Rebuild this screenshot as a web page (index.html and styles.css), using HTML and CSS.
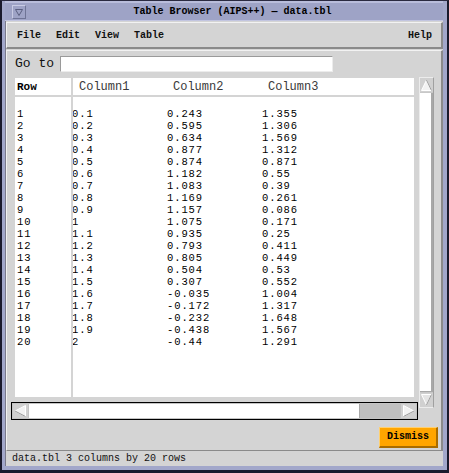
FILE: index.html
```html
<!DOCTYPE html>
<html>
<head>
<meta charset="utf-8">
<link rel="stylesheet" href="styles.css">
</head>
<body>
<div class="window">
  <div class="titlebar">
    <div class="winbtn">
      <svg width="12" height="12" viewBox="0 0 12 12"><polygon points="2.5,3.5 9.5,3.5 6,9.5" fill="none" stroke="#5a5f80" stroke-width="1"/></svg>
    </div>
    <div class="title">Table Browser (AIPS++) — data.tbl</div>
  </div>
  <div class="client">
    <div class="menubar">
      <span class="mi">File</span>
      <span class="mi">Edit</span>
      <span class="mi">View</span>
      <span class="mi">Table</span>
      <span class="mi help">Help</span>
    </div>
    <div class="panel">
      <div class="goto">
        <span class="gotolabel">Go to</span>
        <div class="input"></div>
      </div>
      <div class="tablewrap">
        <div class="tableleft">
          <div class="grid">
            <div class="rowcol">
              <div class="hdr"><span class="rowhdr">Row</span></div>
              <div class="body">
                <div>1</div><div>2</div><div>3</div><div>4</div><div>5</div>
                <div>6</div><div>7</div><div>8</div><div>9</div><div>10</div>
                <div>11</div><div>12</div><div>13</div><div>14</div><div>15</div>
                <div>16</div><div>17</div><div>18</div><div>19</div><div>20</div>
              </div>
            </div>
            <div class="datacol">
              <div class="hdr cols"><span>Column1</span><span>Column2</span><span>Column3</span></div>
              <div class="body cols">
                <span>0.1</span><span>0.243</span><span>1.355</span>
                <span>0.2</span><span>0.595</span><span>1.306</span>
                <span>0.3</span><span>0.634</span><span>1.569</span>
                <span>0.4</span><span>0.877</span><span>1.312</span>
                <span>0.5</span><span>0.874</span><span>0.871</span>
                <span>0.6</span><span>1.182</span><span>0.55</span>
                <span>0.7</span><span>1.083</span><span>0.39</span>
                <span>0.8</span><span>1.169</span><span>0.261</span>
                <span>0.9</span><span>1.157</span><span>0.086</span>
                <span>1</span><span>1.075</span><span>0.171</span>
                <span>1.1</span><span>0.935</span><span>0.25</span>
                <span>1.2</span><span>0.793</span><span>0.411</span>
                <span>1.3</span><span>0.805</span><span>0.449</span>
                <span>1.4</span><span>0.504</span><span>0.53</span>
                <span>1.5</span><span>0.307</span><span>0.552</span>
                <span>1.6</span><span>-0.035</span><span>1.004</span>
                <span>1.7</span><span>-0.172</span><span>1.317</span>
                <span>1.8</span><span>-0.232</span><span>1.648</span>
                <span>1.9</span><span>-0.438</span><span>1.567</span>
                <span>2</span><span>-0.44</span><span>1.291</span>
              </div>
            </div>
          </div>
          <div class="hscroll">
            <div class="arrow">
              <svg width="15" height="14" viewBox="0 0 15 14"><polygon points="12.5,1.5 12.5,12.5 2,7" fill="#f2f2f2" stroke="#ffffff" stroke-width="1"/><line x1="12.5" y1="12.5" x2="2" y2="7" stroke="#9a9a9a"/></svg>
            </div>
            <div class="hthumb"></div>
            <div class="trough"></div>
            <div class="arrow">
              <svg width="15" height="14" viewBox="0 0 15 14"><polygon points="2.5,1.5 2.5,12.5 13,7" fill="#f2f2f2" stroke="#ffffff" stroke-width="1"/><line x1="2.5" y1="12.5" x2="13" y2="7" stroke="#9a9a9a"/></svg>
            </div>
          </div>
        </div>
        <div class="vscroll">
          <div class="varrow">
            <svg width="13" height="14" viewBox="0 0 13 14"><polygon points="1.5,12.5 11.5,12.5 6.5,2" fill="#f2f2f2" stroke="#ffffff" stroke-width="1"/><line x1="11.5" y1="12.5" x2="6.5" y2="2" stroke="#9a9a9a"/></svg>
          </div>
          <div class="vthumb"></div>
          <div class="varrow">
            <svg width="13" height="14" viewBox="0 0 13 14"><polygon points="1.5,1.5 11.5,1.5 6.5,12" fill="#e4e4e4" stroke="#ffffff" stroke-width="1"/><line x1="11.5" y1="1.5" x2="6.5" y2="12" stroke="#9a9a9a"/></svg>
          </div>
        </div>
      </div>
      <div class="actions">
        <div class="dismiss">Dismiss</div>
      </div>
    </div>
    <div class="status">data.tbl 3 columns by 20 rows</div>
  </div>
</div>
</body>
</html>
```

FILE: styles.css
```css
html, body {
  margin: 0;
  padding: 0;
  background: #1a1a2c;
}

.window {
  width: 449px;
  height: 473px;
  box-sizing: border-box;
  background: #a2a7ca;
  border-top: 1px solid #2a2a40;
  border-left: 2px solid #1a1a2c;
  border-right: 2px solid #1a1a2c;
  border-bottom: 3px solid #1a1a2c;
  padding: 0 4px 4px 3px;
  display: flex;
  flex-direction: column;
  font-family: "Liberation Mono", "DejaVu Sans Mono", monospace;
}

.titlebar {
  height: 20px;
  box-sizing: border-box;
  border-top: 2px solid #b9bddb;
  border-bottom: 1px solid #c2c5e0;
  background: #9ea3c6;
  display: flex;
  align-items: center;
}

.winbtn {
  width: 14px;
  height: 14px;
  box-sizing: border-box;
  margin-left: 7px;
  border-top: 1px solid #c8cbe4;
  border-left: 1px solid #c8cbe4;
  border-right: 1px solid #6f7496;
  border-bottom: 1px solid #6f7496;
  display: flex;
  align-items: center;
  justify-content: center;
}

.title {
  flex: 1;
  text-align: center;
  font-size: 10px;
  font-weight: bold;
  color: #000;
  padding-right: 4px;
}

.client {
  flex: 1;
  display: flex;
  flex-direction: column;
  background: #d4d4d4;
  border-left: 1px solid #7a7a8a;
}

.menubar {
  margin-top: 1px;
  height: 27px;
  box-sizing: border-box;
  border-top: 1px solid #f2f2f2;
  border-left: 1px solid #f2f2f2;
  border-right: 2px solid #8a8a8a;
  border-bottom: 2px solid #8a8a8a;
  display: flex;
  align-items: center;
  gap: 15px;
  padding-left: 10px;
  padding-right: 9px;
  font-size: 10px;
  font-weight: bold;
  color: #111;
}

.menubar .help {
  margin-left: auto;
}

.panel {
  flex: 1;
  margin-top: 1px;
  box-sizing: border-box;
  border-top: 1px solid #f2f2f2;
  border-left: 1px solid #f2f2f2;
  border-right: 2px solid #8a8a8a;
  border-bottom: 1px solid #8a8a8a;
  padding-left: 4px;
  display: flex;
  flex-direction: column;
}

.goto {
  margin-top: 5px;
  height: 16px;
  display: flex;
  align-items: center;
  padding-left: 4px;
}

.gotolabel {
  font-size: 13px;
  color: #111;
  width: 45px;
  line-height: 16px;
}

.input {
  width: 273px;
  height: 16px;
  box-sizing: border-box;
  background: #fff;
  border-top: 1px solid #9a9a9a;
  border-left: 1px solid #9a9a9a;
  border-right: 1px solid #ececec;
  border-bottom: 1px solid #ececec;
}

.tablewrap {
  margin-top: 5px;
  display: flex;
  align-items: flex-start;
}

.tableleft {
  width: 407px;
  display: flex;
  flex-direction: column;
}

.grid {
  margin: 1px 4px 0 4px;
  height: 319px;
  display: flex;
  gap: 2px;
}

.rowcol {
  width: 56px;
  background: #fff;
}

.datacol {
  flex: 1;
  background: #fff;
  overflow: hidden;
}

.hdr {
  height: 17px;
  line-height: 18px;
  border-bottom: 2px solid #d4d4d4;
  font-size: 12px;
  color: #3a3a3a;
}

.rowhdr {
  padding-left: 2px;
  font-weight: bold;
  font-size: 11px;
  color: #000;
}

.body {
  padding-top: 11px;
  font-size: 10.5px;
  letter-spacing: 0.9px;
  line-height: 12px;
  color: #000;
}

.rowcol .body {
  padding-left: 2px;
}

.cols {
  display: grid;
  grid-template-columns: 94px 95px 1fr;
}

.hdr.cols span {
  padding-left: 6px;
}

.body.cols span:nth-child(3n+1) {
  margin-left: -1px;
}

.hscroll {
  margin-top: 5px;
  height: 18px;
  box-sizing: border-box;
  border: 1px solid #000;
  padding: 1px;
  display: flex;
  background: #c4c4c4;
}

.arrow {
  width: 15px;
  height: 14px;
  background: #d0d0d0;
}

.hthumb {
  width: 330px;
  margin-left: 1px;
  background: #fff;
  border-right: 1px solid #a8a8a8;
}

.trough {
  flex: 1;
  background: #c0c0c0;
}

.vscroll {
  margin-left: 1px;
  width: 15px;
  height: 331px;
  box-sizing: border-box;
  border-top: 1px solid #ececec;
  border-left: 1px solid #ececec;
  border-right: 1px solid #a0a0a0;
  border-bottom: 1px solid #ececec;
  background: #c8c8c8;
  display: flex;
  flex-direction: column;
}

.varrow {
  height: 14px;
  background: #d0d0d0;
}

.vthumb {
  height: 298px;
  margin-top: 1px;
  margin-bottom: 1px;
  background: #fff;
  border-right: 2px solid #a8a8a8;
  border-bottom: 1px solid #a8a8a8;
}

.actions {
  margin-top: 7px;
  display: flex;
  justify-content: flex-end;
  padding-right: 3px;
}

.dismiss {
  width: 59px;
  height: 21px;
  box-sizing: border-box;
  background: #ffa500;
  border-top: 1px solid #ffd070;
  border-left: 1px solid #ffd070;
  border-right: 2px solid #a86c00;
  border-bottom: 2px solid #a86c00;
  font-size: 10px;
  font-weight: bold;
  color: #000;
  text-align: center;
  line-height: 18px;
}

.status {
  height: 15px;
  line-height: 15px;
  padding-left: 6px;
  font-size: 10px;
  color: #111;
}
```
